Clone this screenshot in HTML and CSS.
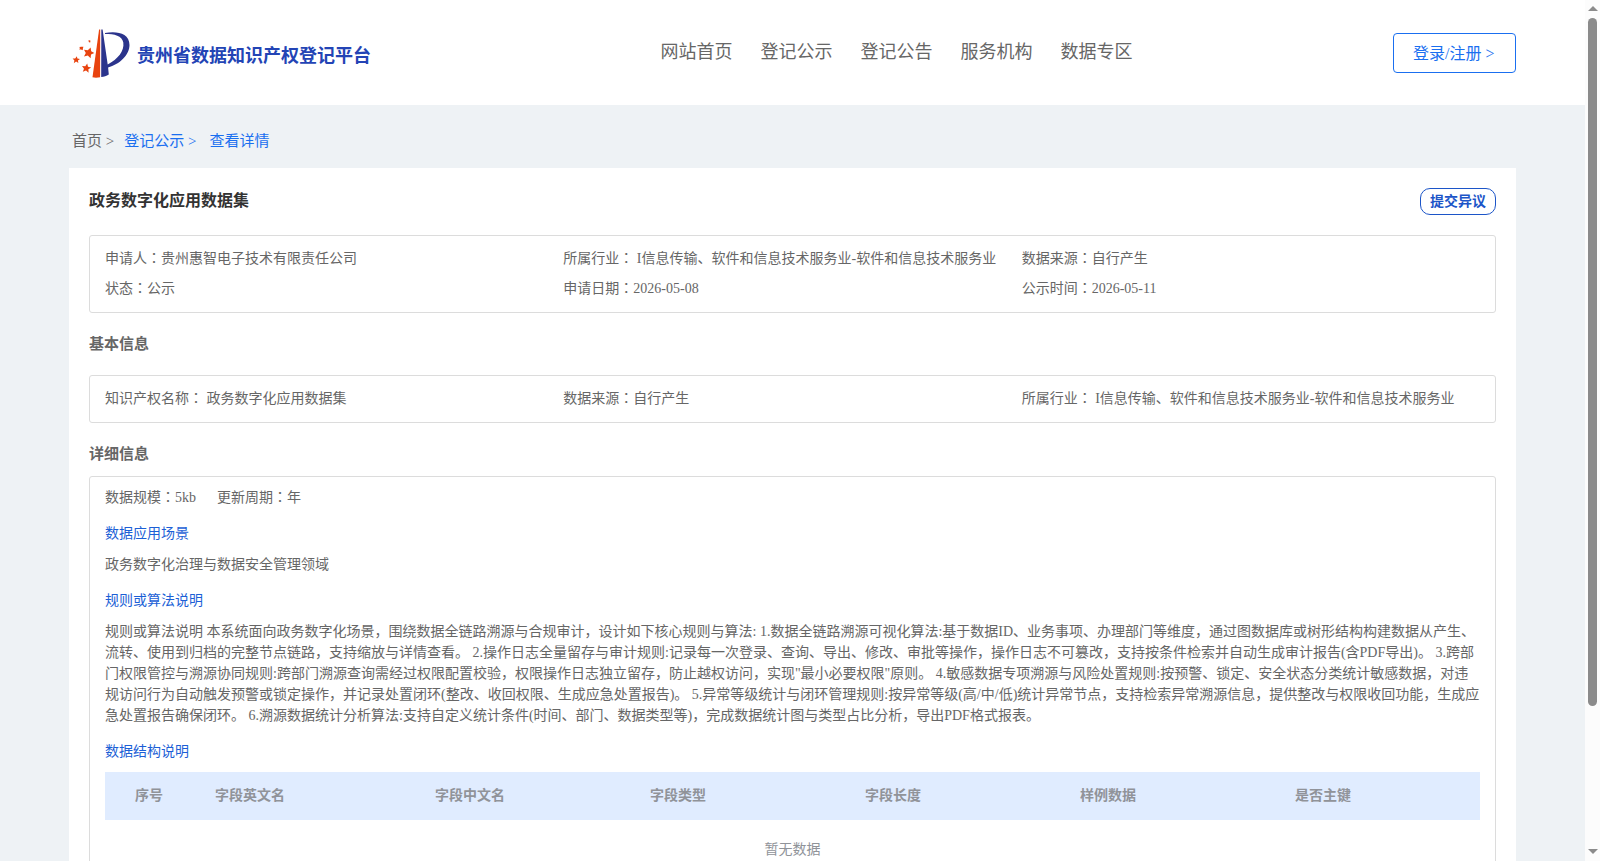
FILE: index.html
```html
<!DOCTYPE html>
<html lang="zh-CN">
<head>
<meta charset="utf-8">
<title>贵州省数据知识产权登记平台</title>
<link rel="stylesheet" href="styles.css">
</head>
<body>
<div class="page">
  <div class="content">
    <header class="header">
      <div class="brand">
        <svg class="logo" viewBox="0 0 60 52" width="60" height="52">
          <g fill="#e8430f">
            <path d="M20.5 49.3 27.1 1.5 28.2 1.5 28.1 49.3 24 49.8Z"/>
            <path d="M18.6 19.6 19.2 23.3 22.3 25 19 26.4 18.6 30.2 15.8 27.6 12 28.4 13.8 25 12 21.8 15.8 22.3Z"/>
            <path d="M15.2 35.6 16 38.8 19.2 39.6 16.4 41.3 16.6 44.8 14 42.6 10.8 43.8 12 40.7 10 38 13.3 38.2Z"/>
            <path d="M4.8 28.3 5.4 30.5 8 31 5.9 32.5 6.4 35 4.1 33.6 1.8 35.2 2.4 32.4 .6 30.6 3.2 30.5Z"/>
            <path d="M7.4 19.1 9.4 18.8 11.4 18.8 10.9 20.4 10.7 22.2 9 21.5 7.2 21.4 7.9 20.3Z"/>
            <path d="M16.3 12.6 17.6 12.2 18.5 12.8 18.2 14.4 17 14.2Z"/>
          </g>
          <g fill="#2b348c">
            <path d="M29.3 1.5H30.6L35.7 36.5C46 31 52.500 23 51.3 14.5 50 7.500 42.5 6 33 6V5C44 3 57.5 4.5 57.5 17 57.5 27 47.5 36.5 36.1 39.4L36.8 46.4C34.5 47.6 32 48.8 29.2 49.1Z"/>
          </g>
        </svg>
        <span class="brand-name">贵州省数据知识产权登记平台</span>
      </div>
      <nav class="nav">
        <a>网站首页</a><a>登记公示</a><a>登记公告</a><a>服务机构</a><a>数据专区</a>
      </nav>
      <a class="login">登录/注册 &gt;</a>
    </header>
    <main class="main">
      <div class="crumbs"><span>首页 &gt;</span><a class="crumb-list">登记公示 &gt;</a><a class="crumb-current">查看详情</a></div>
      <section class="panel">
        <div class="panel-head">
          <h1 class="title">政务数字化应用数据集</h1>
          <a class="objection">提交异议</a>
        </div>
        <div class="box grid">
          <div>申请人<b class="colon" lang="zh-Hant">：</b>贵州惠智电子技术有限责任公司</div>
          <div>所属行业<b class="colon" lang="zh-Hant">：</b> I信息传输、软件和信息技术服务业-软件和信息技术服务业</div>
          <div>数据来源<b class="colon" lang="zh-Hant">：</b>自行产生</div>
          <div>状态<b class="colon" lang="zh-Hant">：</b>公示</div>
          <div>申请日期<b class="colon" lang="zh-Hant">：</b>2026-05-08</div>
          <div>公示时间<b class="colon" lang="zh-Hant">：</b>2026-05-11</div>
        </div>
        <h2 class="section section-basic">基本信息</h2>
        <div class="box grid">
          <div>知识产权名称<b class="colon" lang="zh-Hant">：</b> 政务数字化应用数据集</div>
          <div>数据来源<b class="colon" lang="zh-Hant">：</b>自行产生</div>
          <div>所属行业<b class="colon" lang="zh-Hant">：</b> I信息传输、软件和信息技术服务业-软件和信息技术服务业</div>
        </div>
        <h2 class="section section-detail">详细信息</h2>
        <div class="box detail">
          <div class="meta"><span>数据规模<b class="colon" lang="zh-Hant">：</b>5kb</span><span>更新周期<b class="colon" lang="zh-Hant">：</b>年</span></div>
          <h3 class="sub">数据应用场景</h3>
          <p class="text">政务数字化治理与数据安全管理领域</p>
          <h3 class="sub">规则或算法说明</h3>
          <p class="text">规则或算法说明 本系统面向政务数字化场景，围绕数据全链路溯源与合规审计，设计如下核心规则与算法: 1.数据全链路溯源可视化算法:基于数据ID、业务事项、办理部门等维度，通过图数据库或树形结构构建数据从产生、流转、使用到归档的完整节点链路，支持缩放与详情查看。 2.操作日志全量留存与审计规则:记录每一次登录、查询、导出、修改、审批等操作，操作日志不可篡改，支持按条件检索并自动生成审计报告(含PDF导出)。 3.跨部门权限管控与溯源协同规则:跨部门溯源查询需经过权限配置校验，权限操作日志独立留存，防止越权访问，实现"最小必要权限"原则。 4.敏感数据专项溯源与风险处置规则:按预警、锁定、安全状态分类统计敏感数据，对违规访问行为自动触发预警或锁定操作，并记录处置闭环(整改、收回权限、生成应急处置报告)。 5.异常等级统计与闭环管理规则:按异常等级(高/中/低)统计异常节点，支持检索异常溯源信息，提供整改与权限收回功能，生成应急处置报告确保闭环。 6.溯源数据统计分析算法:支持自定义统计条件(时间、部门、数据类型等)，完成数据统计图与类型占比分析，导出PDF格式报表。</p>
          <h3 class="sub">数据结构说明</h3>
          <div class="thead">
            <span>序号</span><span>字段英文名</span><span>字段中文名</span><span>字段类型</span><span>字段长度</span><span>样例数据</span><span>是否主键</span>
          </div>
          <div class="empty">暂无数据</div>
        </div>
      </section>
    </main>
  </div>
  <div class="scrollbar">
    <i class="arrow-up"></i><i class="thumb"></i><i class="arrow-down"></i>
  </div>
</div>
</body>
</html>
```
FILE: styles.css
```css
* { box-sizing: border-box; }
body { margin: 0; font-family: "Liberation Serif", "Noto Sans CJK SC", serif; font-size: 14px; color: #666; background: #eef2f5; }
h1, h2, h3, p { margin: 0; }
.page { display: flex; height: 861px; overflow: hidden; }
.content { flex: 1; min-width: 0; }
.header { height: 105px; padding: 0 69px; background: #fff; display: flex; justify-content: space-between; }
.brand { display: flex; padding-left: 3px; }
.logo { margin-top: 28px; }
.brand-name { margin-left: 5px; font-size: 18px; font-weight: bold; line-height: 24px; margin-top: 44px; color: #2344b5; }
.nav { display: flex; gap: 28px; font-size: 18px; line-height: 24px; padding-top: 40px; margin-right: -29px; }
.login { width: 123px; height: 40px; margin-top: 33px; border: 1px solid #1a6ff0; border-radius: 4px; color: #1a6ff0; font-size: 16px; line-height: 40px; padding-left: 19px; }
.main { padding: 0 69px; }
.crumbs { height: 63px; padding: 26px 0 0 3px; display: flex; font-size: 15px; line-height: 20px; }
.crumbs a { color: #1a6ff0; }
.crumb-list { margin-left: 10px; }
.crumb-current { margin-left: 13px; }
.panel { background: #fff; padding: 20px; height: 900px; }
.panel-head { display: flex; justify-content: space-between; height: 47px; }
.title { font-size: 16px; line-height: 25px; color: #333; }
.objection { width: 76px; height: 27px; border: 1px solid #1c55c8; border-radius: 10px; color: #1c55c8; font-weight: bold; line-height: 25px; text-align: center; }
.box { border: 1px solid #dcdcdc; border-radius: 3px; padding: 8px 15px; }
.grid { display: grid; grid-template-columns: repeat(3, 1fr); line-height: 30px; }
.grid div { white-space: nowrap; }
/* Full-width colon centred in its cell */
.colon { font-family: "Noto Sans CJK TC", sans-serif; font-weight: normal; line-height: 1; }
.section { font-size: 15px; line-height: 20px; }
.section-basic { height: 62px; padding-top: 21px; }
.section-detail { height: 53px; padding-top: 21px; }
.detail { height: 500px; padding-top: 10px; line-height: 21px; }
.meta { display: flex; gap: 21px; }
.sub { font-size: 14px; font-weight: normal; color: #1c5fd6; line-height: 21px; margin-top: 15px; }
.text { margin-top: 10px; }
.thead { display: grid; grid-template-columns: 80px 220px repeat(4, 215px) 1fr; height: 48px; margin-top: 10px; background: #e0ecff; color: #909399; font-weight: bold; line-height: 48px; padding-left: 30px; }
.empty { text-align: center; line-height: 60px; color: #909399; }
.scrollbar { width: 15px; background: #fcfcfc; display: flex; flex-direction: column; align-items: center; padding: 6px 0 7px; }
.arrow-up { border: 5px solid transparent; border-top: 0; border-bottom: 5px solid #8b8b8b; }
.arrow-down { border: 5px solid transparent; border-bottom: 0; border-top: 5px solid #8b8b8b; margin-top: auto; }
.thumb { width: 9px; height: 688px; margin-top: 7px; border-radius: 5px; background: #8b8b8b; }
```
